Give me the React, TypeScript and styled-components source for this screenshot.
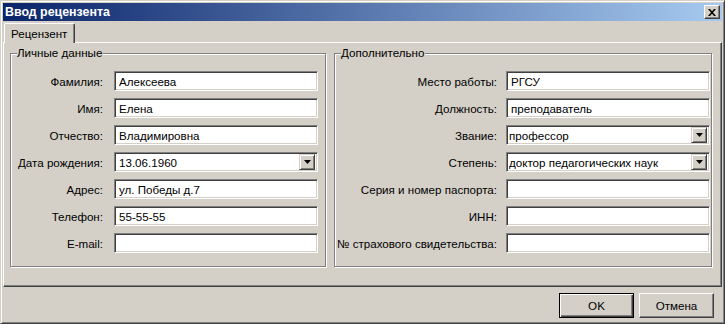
import React from 'react';
import styled, { createGlobalStyle } from 'styled-components';

// Style
const Global = createGlobalStyle`
  html, body {
    margin: 0;
    padding: 0;
    background: #d4d0c8;
  }
  body {
    font-family: "Liberation Sans", Arial, sans-serif;
    font-size: 11.6px;
    color: #000;
  }
`;

const Window = styled.div`
  width: 725px;
  height: 324px;
  box-sizing: border-box;
  border: 1px solid;
  border-color: #d4d0c8 #404040 #404040 #d4d0c8;
  box-shadow: inset 1px 1px 0 #fff, inset -1px -1px 0 #808080;
  padding: 2px;
  background: #d4d0c8;
  display: flex;
  flex-direction: column;
`;

const TitleBar = styled.div`
  height: 18px;
  flex: none;
  display: flex;
  align-items: center;
  justify-content: space-between;
  padding: 0 2px 0 2px;
  background: linear-gradient(to right, #0a246a, #a6caf0);
  color: #fff;
  font-weight: bold;
  font-size: 12.4px;
`;

const CloseButton = styled.div`
  width: 16px;
  height: 14px;
  box-sizing: border-box;
  border: 1px solid;
  border-color: #fff #404040 #404040 #fff;
  box-shadow: inset -1px -1px 0 #808080;
  background: #d4d0c8;
  display: flex;
  align-items: center;
  justify-content: center;
`;

const Body = styled.div`
  padding-top: 2px;
  display: flex;
  flex-direction: column;
`;

const TabStrip = styled.div`
  display: flex;
  height: 19px;
  padding-left: 1px;
`;

const Tab = styled.div`
  position: relative;
  z-index: 1;
  height: 20px;
  box-sizing: border-box;
  padding: 3px 7px 0 6px;
  border-left: 1px solid #fff;
  border-top: 1px solid #fff;
  border-right: 1px solid #404040;
  border-radius: 2px 2px 0 0;
  box-shadow: inset -1px 0 0 #808080;
  background: #d4d0c8;
`;

const Panel = styled.div`
  height: 245px;
  box-sizing: border-box;
  border: 1px solid;
  border-color: #fff #404040 #404040 #fff;
  box-shadow: inset -1px -1px 0 #808080;
  padding: 10px 7px 0 6px;
  display: grid;
  grid-template-columns: 316px 378px;
  column-gap: 8px;
  align-items: start;
`;

const Group = styled.div`
  position: relative;
  height: 214px;
  box-sizing: border-box;
  border: 1px solid #808080;
  box-shadow: inset 1px 1px 0 #fff, 1px 1px 0 #fff;
`;

const Legend = styled.span`
  position: absolute;
  top: -8px;
  left: 6px;
  line-height: 13px;
  background: #d4d0c8;
  padding-right: 1px;
`;

const Fields = styled.div<{ $labelGap: number; $right: number }>`
  display: grid;
  grid-template-columns: 1fr 204px;
  column-gap: ${p => p.$labelGap}px;
  row-gap: 7px;
  padding: 17px ${p => p.$right}px 0 0;
  align-items: center;
`;

const Label = styled.label`
  text-align: right;
  white-space: nowrap;
`;

const Field = styled.div<{ $flush?: boolean }>`
  height: 20px;
  box-sizing: border-box;
  border: 1px solid;
  border-color: #808080 #fff #fff #808080;
  box-shadow: inset 1px 1px 0 #404040, inset -1px -1px 0 #d4d0c8;
  background: #fff;
  display: flex;
  align-items: center;
  padding: 0 2px 0 ${p => (p.$flush ? 2 : 4)}px;
  white-space: nowrap;
`;

const FieldText = styled.span`
  flex: 1;
  overflow: hidden;
`;

const DropButton = styled.div`
  width: 16px;
  height: 16px;
  box-sizing: border-box;
  border: 1px solid;
  border-color: #d4d0c8 #404040 #404040 #d4d0c8;
  box-shadow: inset 1px 1px 0 #fff, inset -1px -1px 0 #808080;
  background: #d4d0c8;
  display: flex;
  align-items: center;
  justify-content: center;
`;

const Footer = styled.div`
  display: flex;
  justify-content: flex-end;
  gap: 5px;
  padding: 6px 8px 0 0;
`;

const Button = styled.div<{ $default?: boolean }>`
  width: 75px;
  height: 25px;
  box-sizing: border-box;
  display: flex;
  align-items: center;
  justify-content: center;
  background: #d4d0c8;
  border: 1px solid;
  ${p =>
    p.$default
      ? `border-color: #000;
         box-shadow: inset 1px 1px 0 #fff, inset -1px -1px 0 #404040, inset -2px -2px 0 #808080;`
      : `border-color: #fff #404040 #404040 #fff;
         box-shadow: inset -1px -1px 0 #808080;`}
`;


// Data
type Row = { label: string; value?: string; combo?: boolean; flush?: boolean };

const personal: Row[] = [
  { label: 'Фамилия:', value: 'Алексеева' },
  { label: 'Имя:', value: 'Елена' },
  { label: 'Отчество:', value: 'Владимировна' },
  { label: 'Дата рождения:', value: '13.06.1960', combo: true },
  { label: 'Адрес:', value: 'ул. Победы д.7' },
  { label: 'Телефон:', value: '55-55-55' },
  { label: 'E-mail:' },
];

const extra: Row[] = [
  { label: 'Место работы:', value: 'РГСУ' },
  { label: 'Должность:', value: 'преподаватель' },
  { label: 'Звание:', value: 'профессор', combo: true, flush: true },
  { label: 'Степень:', value: 'доктор педагогических наук', combo: true, flush: true },
  { label: 'Серия и номер паспорта:' },
  { label: 'ИНН:' },
  { label: '№ страхового свидетельства:' },
];


// Component
function Arrow() {
  return (
    <svg width="7" height="4" viewBox="0 0 7 4">
      <path d="M0 0h7L3.5 4z" fill="#000" />
    </svg>
  );
}

function FieldRows({ rows }: { rows: Row[] }) {
  return (
    <>
      {rows.map(r => (
        <React.Fragment key={r.label}>
          <Label>{r.label}</Label>
          <Field $flush={r.flush}>
            <FieldText>{r.value}</FieldText>
            {r.combo && <DropButton><Arrow /></DropButton>}
          </Field>
        </React.Fragment>
      ))}
    </>
  );
}

function App() {
  return (
    <>
      <Global />
      <Window>
        <TitleBar>
          <span>Ввод рецензента</span>
          <CloseButton>
            <svg width="8" height="7" viewBox="0 0 8 7">
              <path d="M0 0h2l2 2.2L6 0h2L5 3.5 8 7H6L4 4.8 2 7H0l3-3.5z" fill="#000" />
            </svg>
          </CloseButton>
        </TitleBar>
        <Body>
          <TabStrip>
            <Tab>Рецензент</Tab>
          </TabStrip>
          <Panel>
            <Group>
              <Legend>Личные данные</Legend>
              <Fields $labelGap={11} $right={7}>
                <FieldRows rows={personal} />
              </Fields>
            </Group>
            <Group>
              <Legend>Дополнительно</Legend>
              <Fields $labelGap={9} $right={1}>
                <FieldRows rows={extra} />
              </Fields>
            </Group>
          </Panel>
          <Footer>
            <Button $default>OK</Button>
            <Button>Отмена</Button>
          </Footer>
        </Body>
      </Window>
    </>
  );
}

export default App;
